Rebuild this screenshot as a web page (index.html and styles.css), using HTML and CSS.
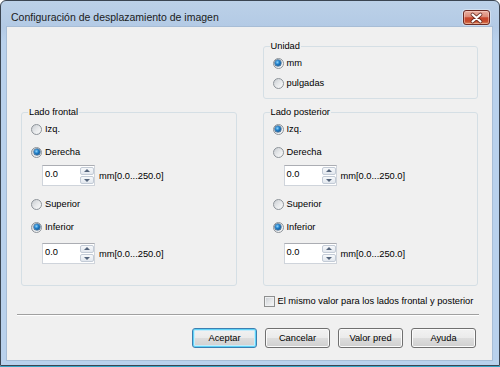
FILE: index.html
```html
<!DOCTYPE html>
<html lang="es">
<head>
<meta charset="utf-8">
<title>Configuración de desplazamiento de imagen</title>
<link rel="stylesheet" href="styles.css">
</head>
<body>
<div class="window">
  <div class="titlebar">
    <span class="title">Configuración de desplazamiento de imagen</span>
    <span class="close">
      <svg width="27" height="14" viewBox="0 0 27 14">
        <path d="M9.5 3.5 L17.5 10.5 M17.5 3.5 L9.5 10.5" stroke="#5a231c" stroke-width="3.8" stroke-linecap="round" fill="none" opacity="0.8"/>
        <path d="M9.5 3.5 L17.5 10.5 M17.5 3.5 L9.5 10.5" stroke="#ffffff" stroke-width="2.1" stroke-linecap="round" fill="none"/>
      </svg>
    </span>
  </div>
  <div class="client">
    <div class="columns">
      <fieldset class="group unit">
        <legend>Unidad</legend>
        <div class="group-body unit-body">
          <label class="opt"><span class="radio checked"></span>mm</label>
          <label class="opt"><span class="radio"></span>pulgadas</label>
        </div>
      </fieldset>
    </div>
    <div class="columns sides">
      <fieldset class="group">
        <legend>Lado frontal</legend>
        <div class="group-body side-body">
          <label class="opt"><span class="radio"></span>Izq.</label>
          <label class="opt near"><span class="radio checked"></span>Derecha</label>
          <div class="spin-row first">
            <div class="spinner"><span class="value">0.0</span><span class="spin"><span class="up"></span><span class="down"></span></span></div>
            <span class="range">mm[0.0...250.0]</span>
          </div>
          <label class="opt after-spin"><span class="radio"></span>Superior</label>
          <label class="opt near"><span class="radio checked"></span>Inferior</label>
          <div class="spin-row second">
            <div class="spinner"><span class="value">0.0</span><span class="spin"><span class="up"></span><span class="down"></span></span></div>
            <span class="range">mm[0.0...250.0]</span>
          </div>
        </div>
      </fieldset>
      <fieldset class="group">
        <legend>Lado posterior</legend>
        <div class="group-body side-body">
          <label class="opt"><span class="radio checked"></span>Izq.</label>
          <label class="opt near"><span class="radio"></span>Derecha</label>
          <div class="spin-row first">
            <div class="spinner"><span class="value">0.0</span><span class="spin"><span class="up"></span><span class="down"></span></span></div>
            <span class="range">mm[0.0...250.0]</span>
          </div>
          <label class="opt after-spin"><span class="radio"></span>Superior</label>
          <label class="opt near"><span class="radio checked"></span>Inferior</label>
          <div class="spin-row second">
            <div class="spinner"><span class="value">0.0</span><span class="spin"><span class="up"></span><span class="down"></span></span></div>
            <span class="range">mm[0.0...250.0]</span>
          </div>
        </div>
      </fieldset>
    </div>
    <div class="columns check-line">
      <label class="check-row"><span class="checkbox"></span>El mismo valor para los lados frontal y posterior</label>
    </div>
    <div class="separator"></div>
    <div class="buttons">
      <button class="btn default">Aceptar</button>
      <button class="btn">Cancelar</button>
      <button class="btn">Valor pred</button>
      <button class="btn">Ayuda</button>
    </div>
  </div>
</div>
</body>
</html>
```

FILE: styles.css
```css
html, body {
  margin: 0;
  padding: 0;
}

body {
  width: 500px;
  height: 367px;
  overflow: hidden;
  background: linear-gradient(to bottom, #ffffff 366px, #37a5c6 366px);
  font-family: "Liberation Sans", Arial, sans-serif;
  font-size: 9.3px;
  color: #000;
}

.window {
  box-sizing: border-box;
  width: 500px;
  height: 366px;
  border: 1px solid #3b4552;
  border-radius: 6px 6px 0 0;
  background: linear-gradient(to bottom, #bcd1e8 0px, #b3cae5 26px, #b9d1ec 40px, #b9d1ec 100%);
  padding: 0 7px 5px 6px;
  display: flex;
  flex-direction: column;
}

.titlebar {
  height: 26px;
  flex: none;
  display: flex;
  justify-content: space-between;
  align-items: flex-start;
}

.title {
  margin: 8px 0 0 4px;
  line-height: 16px;
  font-size: 10.5px;
  color: #1b1b1b;
}

.close {
  margin: 9px 2px 0 0;
  box-sizing: border-box;
  width: 27px;
  height: 15px;
  border: 1px solid #6d2a23;
  border-radius: 3px;
  background: linear-gradient(to bottom, #eab0a3 0%, #dc8a77 45%, #c8472e 52%, #c54a2d 78%, #dc8558 100%);
  box-shadow: inset 0 0 0 1px rgba(255, 225, 215, 0.45), 0 0 0 1px rgba(255, 255, 255, 0.35);
  display: flex;
  align-items: center;
  justify-content: center;
}

.close svg {
  display: block;
  margin: -1px;
}

.client {
  flex: 1;
  background: #f0f0f0;
  box-shadow: 0 0 0 1px #a7bdd6;
  padding: 13px 14px 0 14px;
  display: flex;
  flex-direction: column;
}

.columns {
  display: grid;
  grid-template-columns: 1fr 1fr;
  column-gap: 26px;
}

.unit {
  grid-column: 2;
}

.group {
  margin: 0;
  padding: 0;
  min-width: 0;
  border: 1px solid #d5dfe5;
  border-radius: 3px;
}

.group legend {
  margin-left: 6px;
  padding: 0 1px;
  line-height: 13px;
}

.group-body {
  padding-left: 9px;
  display: flex;
  flex-direction: column;
}

.unit-body {
  padding-bottom: 5px;
}

.sides {
  margin-top: 7px;
}

.side-body {
  padding-bottom: 21px;
}

.opt {
  height: 20px;
  display: flex;
  align-items: center;
}

.opt.near {
  margin-top: 3px;
}

.opt.after-spin {
  margin-top: 8px;
}

.radio {
  position: relative;
  box-sizing: border-box;
  width: 11px;
  height: 11px;
  margin-right: 3px;
  border: 1px solid #8e949a;
  border-radius: 50%;
  background: linear-gradient(135deg, #c9cdd2 0%, #e6e8ea 50%, #fbfbfb 100%);
  flex: none;
}

.radio.checked::after {
  content: "";
  position: absolute;
  left: 1.5px;
  top: 1.5px;
  width: 6px;
  height: 6px;
  border-radius: 50%;
  background: radial-gradient(circle at 40% 38%, #8fd6ff 0%, #1f7fc9 40%, #0b3a6b 100%);
  box-shadow: 0 0 0 0.5px #17497a;
}

.spin-row {
  display: flex;
  align-items: center;
  margin-left: 11px;
}

.spin-row.first {
  margin-top: 3px;
}

.spin-row.second {
  margin-top: 6px;
}

.spinner {
  box-sizing: border-box;
  width: 53px;
  height: 21px;
  background: #fff;
  border: 1px solid #cfd4db;
  border-top-color: #abadb3;
  display: flex;
  align-items: stretch;
}

.value {
  flex: 1;
  padding-left: 2px;
  line-height: 17px;
}

.spin {
  width: 14px;
  margin: 1px 0 1px 0;
  display: flex;
  flex-direction: column;
  gap: 1px;
}

.spin span {
  position: relative;
  flex: 1;
  box-sizing: border-box;
  border: 1px solid #c3cbd6;
  border-radius: 2px;
  background: linear-gradient(to bottom, #f7f9fb, #e2e7ee);
}

.spin span::after {
  content: "";
  position: absolute;
  left: 50%;
  top: 50%;
  margin-left: -3px;
  border-left: 3px solid transparent;
  border-right: 3px solid transparent;
}

.spin .up::after {
  margin-top: -2px;
  border-bottom: 3px solid #55657c;
}

.spin .down::after {
  margin-top: -1px;
  border-top: 3px solid #55657c;
}

.range {
  margin-left: 4px;
}

.check-line {
  margin-top: 8px;
}

.check-row {
  grid-column: 2;
  height: 14px;
  display: flex;
  align-items: center;
  padding-left: 1px;
  white-space: nowrap;
}

.checkbox {
  box-sizing: border-box;
  width: 11px;
  height: 11px;
  margin-right: 3px;
  border: 1px solid #8e8f8f;
  background: linear-gradient(135deg, #c8ccd1 0%, #e4e6e8 50%, #f7f7f7 100%);
  box-shadow: inset 0 0 0 1px #eef0f2;
  flex: none;
}

.separator {
  margin: 6px -1px 0 -4px;
  height: 0;
  border-top: 1px solid #a0a0a0;
  border-bottom: 1px solid #ffffff;
}

.buttons {
  margin-top: 12px;
  padding-right: 2px;
  display: flex;
  justify-content: flex-end;
  gap: 8px;
}

.btn {
  box-sizing: border-box;
  width: 65px;
  height: 20px;
  padding: 0;
  font-family: "Liberation Sans", Arial, sans-serif;
  font-size: 9.3px;
  color: #000;
  border: 1px solid #707070;
  border-radius: 3px;
  background: linear-gradient(to bottom, #f2f2f2 0%, #ebebeb 48%, #dddddd 52%, #cfcfcf 100%);
  box-shadow: inset 0 0 0 1px #fbfbfb;
}

.btn.default {
  border-color: #3c7fb1;
  box-shadow: inset 0 0 0 1px #5fd3f7, inset 0 0 0 2px #c5ecfb;
}
```
